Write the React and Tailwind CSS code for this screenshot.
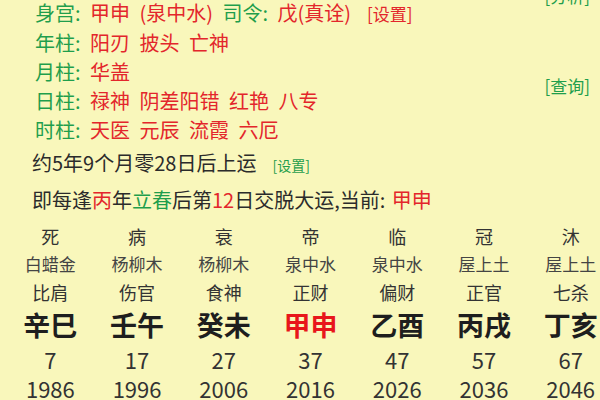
import React from "react";

const G = "text-[#1f9e4c]";
const R = "text-[#e3262b]";

const pillars = [
  { stage: "死", nayin: "白蜡金", god: "比肩", gz: "辛巳", age: 7, year: 1986 },
  { stage: "病", nayin: "杨柳木", god: "伤官", gz: "壬午", age: 17, year: 1996 },
  { stage: "衰", nayin: "杨柳木", god: "食神", gz: "癸未", age: 27, year: 2006 },
  { stage: "帝", nayin: "泉中水", god: "正财", gz: "甲申", age: 37, year: 2016, current: true },
  { stage: "临", nayin: "泉中水", god: "偏财", gz: "乙酉", age: 47, year: 2026 },
  { stage: "冠", nayin: "屋上土", god: "正官", gz: "丙戌", age: 57, year: 2036 },
  { stage: "沐", nayin: "屋上土", god: "七杀", gz: "丁亥", age: 67, year: 2046 },
];

const App = () => {
  return (
    <div
      className="w-[600px] h-[400px] overflow-hidden bg-[#f9f7bb] text-[#2b2b2b]"
      style={{ fontFamily: '"Noto Sans CJK SC", "Noto Sans", sans-serif' }}
    >
      {/* Shensha lines */}
      <div className="flex justify-between pl-[35px] pr-[10px] mt-[-2px]">
        <div className="text-[20px] leading-[29px] whitespace-nowrap [word-spacing:5px]">
          <div>
            <span className={G}>身宫: </span>
            <span className={R}>甲申 (泉中水) </span>
            <span className={G}>司令: </span>
            <span className={R}>戊(真诠)</span>
            <span className={`${R} text-[17px] ml-[16px]`}>[设置]</span>
          </div>
          <div>
            <span className={G}>年柱: </span>
            <span className={R}>阳刃 披头 亡神</span>
          </div>
          <div>
            <span className={G}>月柱: </span>
            <span className={R}>华盖</span>
          </div>
          <div>
            <span className={G}>日柱: </span>
            <span className={R}>禄神 阴差阳错 红艳 八专</span>
          </div>
          <div>
            <span className={G}>时柱: </span>
            <span className={R}>天医 元辰 流霞 六厄</span>
          </div>
        </div>
        <div className={`${G} flex flex-col text-[17px] leading-[20px]`}>
          <span className="mt-[-12px]">[分析]</span>
          <span className="mt-[70px]">[查询]</span>
        </div>
      </div>

      {/* Dayun start */}
      <div className="pl-[32px] text-[20px] mt-[1px]">
        <div className="leading-[36px]">
          约5年9个月零28日后上运
          <span className={`${G} text-[14px] ml-[16px]`}>[设置]</span>
        </div>
        <div className="leading-[34px]">
          即每逢<span className={R}>丙</span>年<span className={G}>立春</span>后第
          <span className={R}>12</span>日交脱大运,当前: <span className={`${R} ml-[2px]`}>甲申</span>
        </div>
      </div>

      {/* Dayun grid */}
      <div className="grid grid-cols-7 w-[607px] ml-[7px] mt-[5px] text-center">
        {pillars.map((p) => (
          <div key={p.year} className="flex flex-col items-center">
            <div className="h-[28px] leading-[28px] text-[18px] text-[#333]">{p.stage}</div>
            <div className="h-[28px] leading-[28px] text-[17px] text-[#444] whitespace-nowrap">
              {p.nayin}
            </div>
            <div className="h-[28px] leading-[28px] text-[18px] text-[#333]">{p.god}</div>
            <div
              className={`h-[38px] leading-[38px] text-[27px] font-bold whitespace-nowrap ${
                p.current ? "text-[#e8161b]" : "text-[#1e1e1e]"
              }`}
            >
              {p.gz}
            </div>
            <div className="h-[30px] leading-[30px] text-[22px] text-[#333]">{p.age}</div>
            <div className="h-[28px] leading-[28px] text-[22px] text-[#333]">{p.year}</div>
          </div>
        ))}
      </div>
    </div>
  );
};

export default App;
